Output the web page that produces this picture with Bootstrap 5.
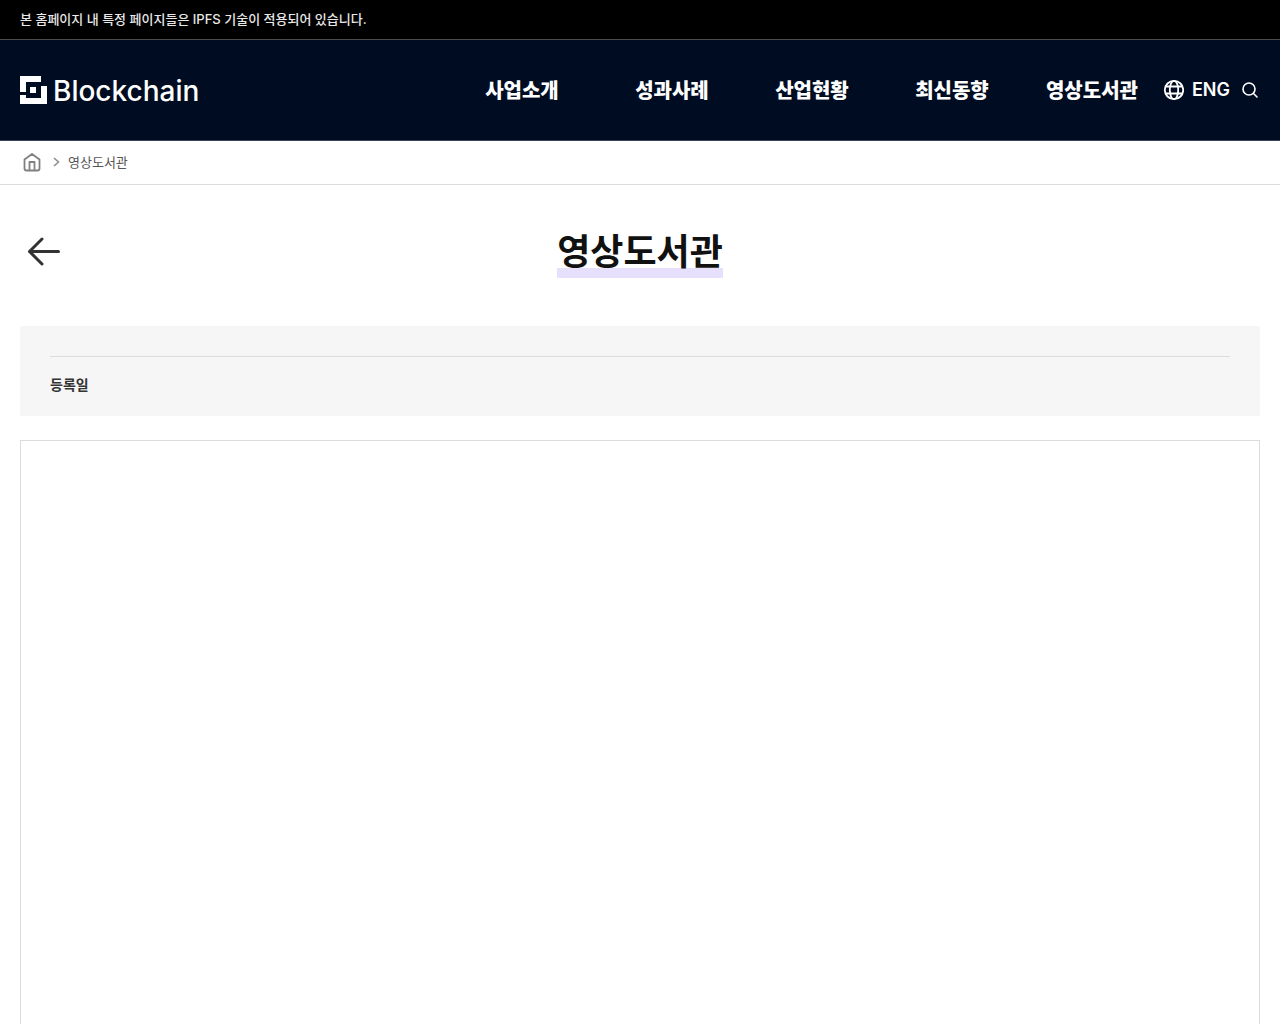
<!DOCTYPE html>
<html lang="ko">
<head>
<meta charset="utf-8">
<meta name="viewport" content="width=device-width, initial-scale=1">
<title>영상도서관 | Blockchain</title>
<link rel="stylesheet" href="https://cdn.jsdelivr.net/npm/bootstrap@5.3.0/dist/css/bootstrap.min.css">
<style>
  body { font-family: Inter, "Noto Sans CJK KR", sans-serif; color: #111; background: #fff; }
  a { text-decoration: none; }
  .notice-bar { min-height: 40px; padding-bottom: 2px; background: #000; border-bottom: 1px solid #4a4a4a; color: #e8e8e8; font-size: 13px; line-height: 20px; font-weight: 500; }
  .site-header { min-height: 101px; padding: 0 18px 0 20px; background: #000c22; border-bottom: 1px solid #3c4459; }
  .brand-link { gap: 6px; }
  .brand-text { padding-top: 2px; font-size: 28px; line-height: 32px; font-weight: 500; }
  .main-menu { padding-top: 2px; font-size: 20px; line-height: 30px; font-weight: 900; }
  .main-menu li { width: 140px; text-align: center; }
  .main-menu li:first-child { width: 160px; }
  .lang-link { font-size: 18px; line-height: 30px; font-weight: 600; }
  .crumbs { min-height: 44px; padding-bottom: 2px; border-bottom: 1px solid #dcdcdc; font-size: 13px; line-height: 20px; color: #555; }
  .title-row { padding-top: 42px; padding-bottom: 48px; }
  .page-title { font-size: 36px; line-height: 51px; font-weight: 700; background: linear-gradient(#e6e0fc, #e6e0fc) left bottom / 100% 10px no-repeat; }
  .info-box { background: #f6f6f6; padding: 30px 30px 20px; }
  .info-row { border-top: 1px solid #dcdcdc; padding-top: 17px; font-size: 14px; line-height: 22px; font-weight: 700; color: #333; }
  .video-frame { margin-top: 24px; border: 1px solid #dcdcdc; }
</style>
<script src="https://cdn.jsdelivr.net/npm/bootstrap@5.3.0/dist/js/bootstrap.bundle.min.js" defer></script>
</head>
<body>
<div class="notice-bar d-flex align-items-center px-3">
  <p class="m-0 ps-1">본 홈페이지 내 특정 페이지들은 IPFS 기술이 적용되어 있습니다.</p>
</div>

<header class="site-header d-flex align-items-center justify-content-between">
  <a href="#" class="brand-link d-flex align-items-center text-white" aria-label="Blockchain">
    <svg width="27" height="28" viewBox="0 0 27 28" fill="#fff" aria-hidden="true">
      <path d="M0 0H21V6H6V16H0ZM10 11H16V17H10ZM21 10H27V28H0V19H6V22H21Z"/>
    </svg>
    <span class="brand-text">Blockchain</span>
  </a>
  <div class="d-flex align-items-center">
    <nav aria-label="주 메뉴">
      <ul class="main-menu list-unstyled d-flex m-0">
        <li><a class="text-white" href="#">사업소개</a></li>
        <li><a class="text-white" href="#">성과사례</a></li>
        <li><a class="text-white" href="#">산업현황</a></li>
        <li><a class="text-white" href="#">최신동향</a></li>
        <li><a class="text-white" href="#">영상도서관</a></li>
      </ul>
    </nav>
    <a href="#" class="lang-link d-flex align-items-center gap-2 text-white">
      <svg width="22" height="22" viewBox="0 0 22 22" fill="none" stroke="#fff" stroke-width="1.8" aria-hidden="true">
        <circle cx="12" cy="11" r="9.2"/><ellipse cx="12" cy="11" rx="4.2" ry="9.2"/><path d="M3.500 7.500H20.500M3.500 14.500H20.500"/>
      </svg>
      <span>ENG</span>
    </a>
    <button type="button" class="btn p-0 border-0 d-flex ms-2" aria-label="검색">
      <svg width="24" height="24" viewBox="0 0 24 24" fill="none" stroke="#fff" stroke-width="1.6" stroke-linecap="round" aria-hidden="true">
        <circle cx="11" cy="11" r="6"/><path d="M15.5 15.5L19 19"/>
      </svg>
    </button>
  </div>
</header>

<nav class="crumbs d-flex align-items-center px-3" aria-label="현재 위치">
  <a href="#" class="d-flex ps-1" aria-label="홈">
    <svg width="24" height="24" viewBox="0 0 24 24" fill="none" stroke="#808080" stroke-width="1.8" stroke-linejoin="round" aria-hidden="true">
      <path d="M4.500 9.500L12 4L19.500 9.500V18.500Q19.500 20.500 17.500 20.500H6.500Q4.500 20.500 4.500 18.500ZM9.500 20V12H14.500V20"/>
    </svg>
  </a>
  <svg class="mx-1" width="16" height="16" viewBox="0 0 16 16" fill="none" stroke="#8a8a8a" stroke-width="1.500" aria-hidden="true"><path d="M6 4L10.500 8L6 12"/></svg>
  <span>영상도서관</span>
</nav>

<main class="px-3">
  <div class="px-1">
    <div class="title-row position-relative d-flex justify-content-center">
      <a href="#" class="position-absolute start-0 ms-1" aria-label="뒤로">
        <svg width="40" height="48" viewBox="0 0 40 48" fill="none" stroke="#333" stroke-width="3" stroke-linecap="round" stroke-linejoin="round" aria-hidden="true"><path d="M18 12L5.500 24.500L18 37M5.500 24.500H34.500"/></svg>
      </a>
      <h1 class="page-title m-0">영상도서관</h1>
    </div>
    <section class="info-box">
      <div class="info-row">등록일</div>
    </section>
    <section class="video-frame ratio ratio-16x9" aria-label="영상"></section>
  </div>
</main>
</body>
</html>
